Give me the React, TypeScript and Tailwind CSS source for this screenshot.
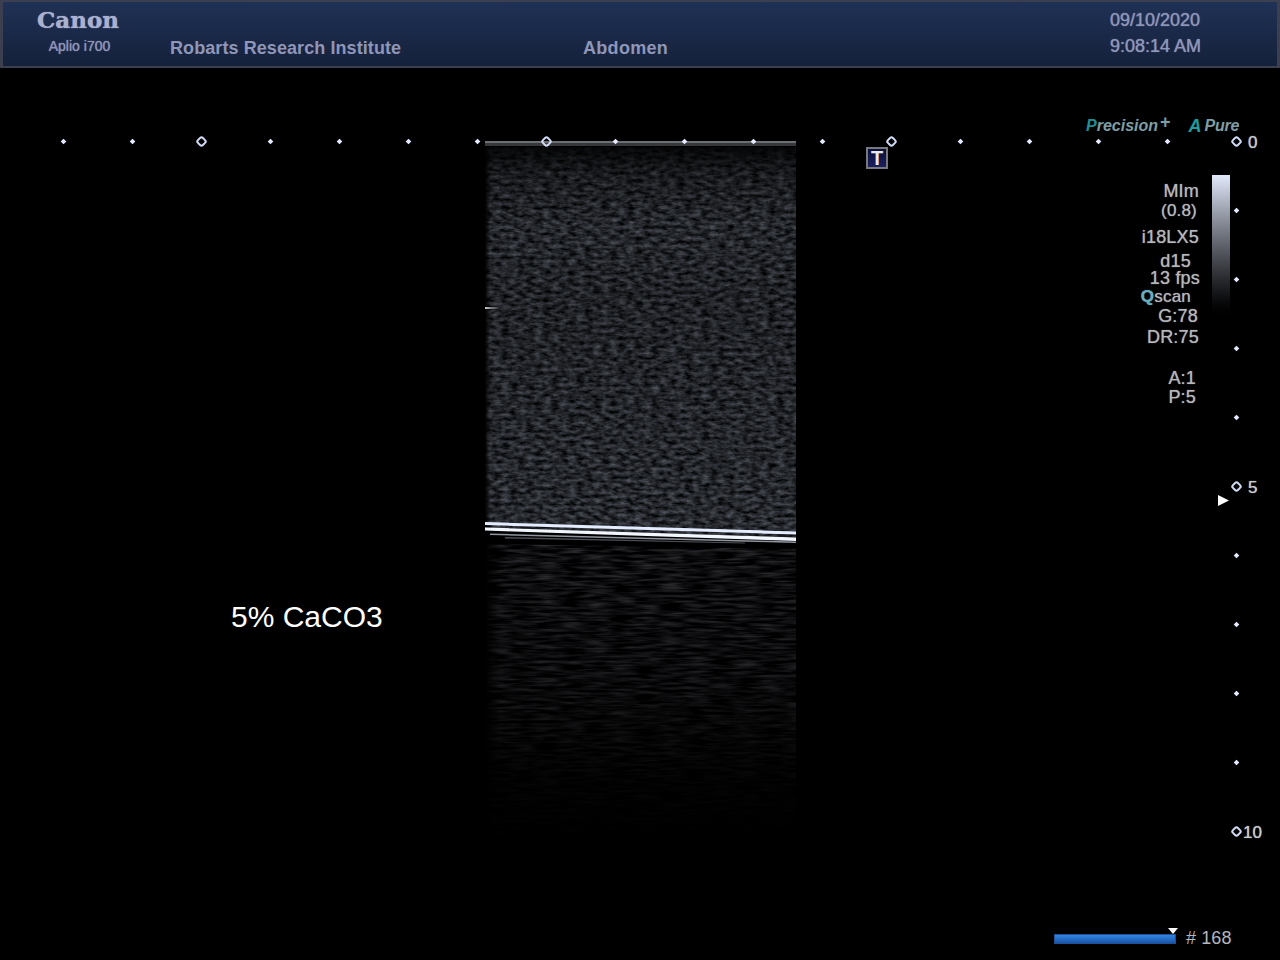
const H_TICKS = Array.from({ length: 17 }, (_, i) => 63 + i * 69)
const V_TICKS = Array.from({ length: 9 }, (_, i) => 210 + i * 69).filter((y) => y !== 486)
const H_RINGS = [201, 546, 891]

function Ring({ cls }: { cls: string }) {
  return <div className={`absolute h-[9px] w-[9px] rotate-45 rounded-[3px] border-[2.5px] border-[#d3dcf6] ${cls}`} />
}

function Tick({ x, y }: { x: number; y: number }) {
  return <div className="absolute h-[4px] w-[4px] translate-x-[0.5px] translate-y-[0.5px] rotate-45 bg-[#e4eaff]" style={{ left: x - 2, top: y - 2 }} />
}

function UltrasoundImage() {
  return (
    <svg className="absolute left-[485px] top-[141px]" width="311" height="700" viewBox="0 0 311 700">
      <defs>
        <filter id="speckle" x="0" y="0" width="100%" height="100%" colorInterpolationFilters="sRGB">
          <feTurbulence type="fractalNoise" baseFrequency="0.12 0.26" numOctaves="3" seed="23" />
          <feColorMatrix values="0.46 0 0 0 -0.08 0.48 0 0 0 -0.08 0.52 0 0 0 -0.08 0 0 0 0 1" />
          <feGaussianBlur stdDeviation="0.6" />
        </filter>
        <filter id="streak" x="0" y="0" width="100%" height="100%" colorInterpolationFilters="sRGB">
          <feTurbulence type="fractalNoise" baseFrequency="0.04 0.35" numOctaves="2" seed="4" />
          <feColorMatrix values="0.42 0 0 0 -0.15 0.42 0 0 0 -0.15 0.44 0 0 0 -0.15 0 0 0 0 1" />
        </filter>
        <filter id="soft" x="-5%" y="-50%" width="110%" height="200%">
          <feGaussianBlur stdDeviation="0.4" />
        </filter>
        <linearGradient id="topShade" x1="0" y1="0" x2="0" y2="1">
          <stop offset="0" stopColor="#000" stopOpacity="0.85" />
          <stop offset="0.07" stopColor="#000" stopOpacity="0.35" />
          <stop offset="0.2" stopColor="#000" stopOpacity="0.05" />
          <stop offset="0.38" stopColor="#000" stopOpacity="0.18" />
          <stop offset="1" stopColor="#000" stopOpacity="0" />
        </linearGradient>
        <linearGradient id="fade" x1="0" y1="0" x2="0" y2="1">
          <stop offset="0" stopColor="#000" stopOpacity="0.1" />
          <stop offset="0.45" stopColor="#000" stopOpacity="0.35" />
          <stop offset="0.8" stopColor="#000" stopOpacity="0.88" />
          <stop offset="1" stopColor="#000" stopOpacity="1" />
        </linearGradient>
        <linearGradient id="leftEdge" x1="0" y1="0" x2="1" y2="0">
          <stop offset="0" stopColor="#000" stopOpacity="1" />
          <stop offset="1" stopColor="#000" stopOpacity="0" />
        </linearGradient>
        <linearGradient id="mark" x1="0" y1="0" x2="1" y2="0">
          <stop offset="0" stopColor="#c9ccd2" />
          <stop offset="1" stopColor="#c9ccd2" stopOpacity="0" />
        </linearGradient>
      </defs>
      {/* speckle above the reflector */}
      <rect x="0" y="6" width="311" height="390" filter="url(#speckle)" />
      <rect x="0" y="6" width="311" height="390" fill="url(#topShade)" />
      <rect x="0" y="6" width="5" height="380" fill="url(#leftEdge)" />
      {/* transducer contact band */}
      <rect x="0" y="0" width="311" height="2" fill="#6b6e73" />
      <rect x="0" y="2" width="311" height="3" fill="#36383c" />
      {/* attenuated region below */}
      <rect x="0" y="400" width="311" height="300" filter="url(#streak)" />
      <rect x="0" y="400" width="311" height="300" fill="url(#fade)" />
      <rect x="0" y="400" width="16" height="300" fill="url(#leftEdge)" />
      <polygon points="0,388 311,396 311,408 0,403" fill="#000" />
      {/* reflector lines */}
      <g filter="url(#soft)">
        <polygon points="0,381 311,390.5 311,393.5 0,384" fill="#e4ecff" />
        <polygon points="0,386.5 311,396.5 311,400 0,389.5" fill="#f2f6ff" />
        <polygon points="5,392.5 311,400.5 311,402 5,394" fill="#8f949e" />
        <polygon points="20,396 260,401.5 260,402.5 20,397.5" fill="#4b4e55" />
      </g>
      {/* small bright mark on left edge */}
      <rect x="0" y="166" width="16" height="2" fill="url(#mark)" />
    </svg>
  )
}

export default function App() {
  return (
    <div className="relative h-[960px] w-[1280px] overflow-hidden bg-black font-['Liberation_Sans',Arial,sans-serif]">
      {/* top bar */}
      <header className="flex h-[68px] items-end border-x-[3px] border-y-2 border-[#3b3f50] bg-gradient-to-b from-[#1f3155] to-[#15213b] pb-[7px] text-[#8f96b8]">
        <div className="mb-[5px] flex w-[150px] flex-col items-center">
          <div className="font-['DejaVu_Serif',serif] text-[23px] font-bold leading-[26px] text-[#aab1cf] [text-shadow:0_0_1px_#aab1cf]">Canon</div>
          <div className="ml-[3px] mt-[5px] text-[14px] leading-[16px] [text-shadow:0_0_1px_#8f96b8]">Aplio i700</div>
        </div>
        <div className="ml-[17px] w-[413px] text-[18px] font-bold leading-[22px] tracking-[0.08px]">Robarts Research Institute</div>
        <div className="text-[18px] font-bold leading-[22px] tracking-[0.3px]">Abdomen</div>
        <div className="ml-auto mr-[76px] flex flex-col text-[18px] leading-[26px] [text-shadow:0_0_1px_#8f96b8]">
          <span>09/10/2020</span>
          <span>9:08:14 AM</span>
        </div>
      </header>

      <UltrasoundImage />

      {/* scale ticks */}
      {H_TICKS.filter((x) => !H_RINGS.includes(x)).map((x) => (
        <Tick key={x} x={x} y={141} />
      ))}
      {V_TICKS.map((y) => (
        <Tick key={y} x={1236} y={y} />
      ))}

      <Ring cls="left-[197px] top-[137px]" />
      <Ring cls="left-[542px] top-[137px]" />
      <Ring cls="left-[887px] top-[137px]" />
      <Ring cls="left-[1232px] top-[137px]" />
      <Ring cls="left-[1232px] top-[482px]" />
      <Ring cls="left-[1232px] top-[827px]" />

      <span className="absolute left-[1248px] top-[133px] text-[17px] leading-[20px] text-[#c6c8cc] [text-shadow:0_0_1px_#c6c8cc]">0</span>
      <span className="absolute left-[1248px] top-[478px] text-[17px] leading-[20px] text-[#c6c8cc] [text-shadow:0_0_1px_#c6c8cc]">5</span>
      <span className="absolute left-[1243px] top-[823px] text-[17px] leading-[20px] text-[#c6c8cc] [text-shadow:0_0_1px_#c6c8cc]">10</span>

      {/* T marker */}
      <div className="absolute left-[866px] top-[147px] flex h-[22px] w-[22px] items-center justify-center border-2 border-[#77797f] bg-gradient-to-b from-[#0b0f38] to-[#1c2160] text-[20px] font-bold leading-none text-[#e8e8ee]">
        T
      </div>

      {/* mode labels */}
      <div className="absolute left-[1086px] top-[117px] flex text-[16px] font-bold italic leading-[18px] text-[#7f9ea3]">
        <span className="text-[#1f8f95]">P</span>
        <span>recision</span>
        <span className="ml-[2px] mt-[-4px] text-[18px] not-italic leading-[18px]">+</span>
        <span className="ml-[18px] text-[18px] text-[#1f9c9c]">A</span>
        <span className="ml-[3px] tracking-[-0.2px]">Pure</span>
      </div>

      {/* acquisition readout */}
      <div className="absolute right-[80px] top-[181px] flex flex-col items-end text-[18px] leading-[20px] tracking-[0.2px] text-[#b5b6bb] [text-shadow:0_0_1px_#9a9ba0]">
        <div className="mr-[1px] h-[20px] leading-[20px]">MIm</div>
        <div className="mr-[3px] h-[26px] text-[17px]">(0.8)</div>
        <div className="mr-[1px] h-[26px]">i18LX5</div>
        <div className="mr-[9px] h-[16px] leading-[16px]">d15</div>
        <div className="h-[18px] leading-[18px]">13 fps</div>
        <div className="mr-[9px] h-[19px] text-[17px] leading-[19px]">
          <span className="font-bold text-[#5fb0c0]">Q</span>scan
        </div>
        <div className="mr-[2px] h-[21px]">G:78</div>
        <div className="mr-[1px] h-[42px]">DR:75</div>
        <div className="mr-[4px] h-[19px] leading-[19px]">A:1</div>
        <div className="mr-[4px] h-[19px] leading-[19px]">P:5</div>
      </div>

      {/* grey map */}
      <div className="absolute left-[1212px] top-[175px] h-[150px] w-[18px] bg-gradient-to-b from-[#e2e9fc] to-black" />

      {/* focus marker */}
      <svg className="absolute left-[1218px] top-[495px]" width="12" height="11" viewBox="0 0 12 11">
        <polygon points="0,0 11,5.5 0,11" fill="#fff" />
      </svg>

      <div className="absolute left-[231px] top-[600px] text-[30px] leading-[34px] text-white">5% CaCO3</div>

      {/* cine bar */}
      <svg className="absolute left-[1168px] top-[928px]" width="11" height="6" viewBox="0 0 11 6">
        <polygon points="0,0 10,0 5,6" fill="#fff" />
      </svg>
      <div className="absolute left-[1054px] top-[934px] h-[10px] w-[122px] border border-[#1d4f96] bg-gradient-to-b from-[#2f86e0] to-[#1c55a8]" />
      <span className="absolute left-[1186px] top-[928px] text-[18px] leading-[20px] tracking-[0.1px] text-[#b5b6bb]"># 168</span>
    </div>
  )
}
